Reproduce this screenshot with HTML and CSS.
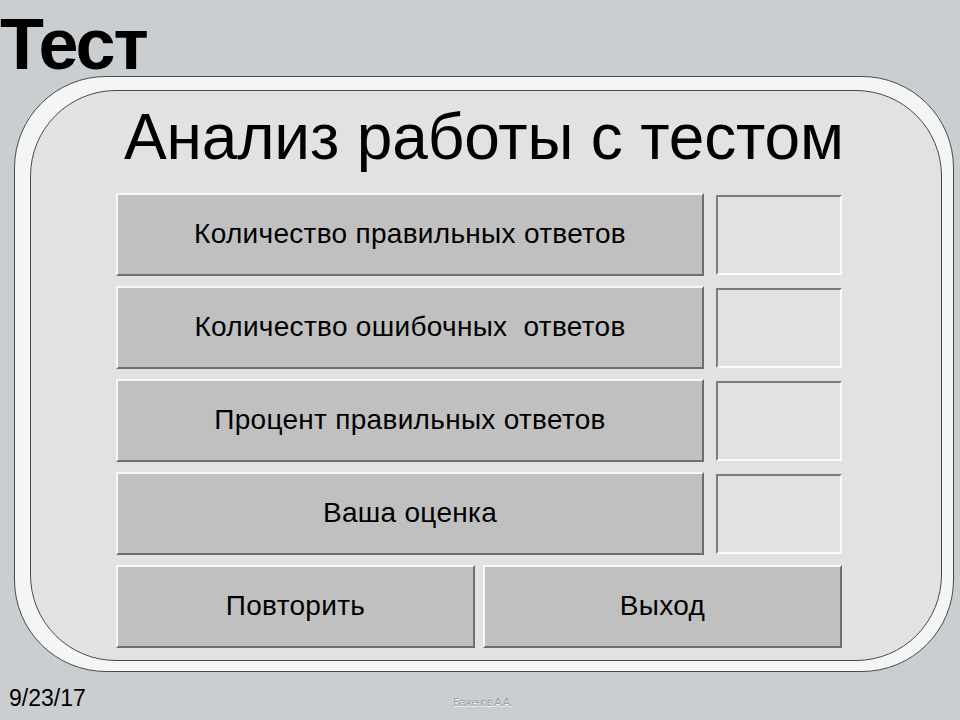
FILE: index.html
```html
<!DOCTYPE html>
<html lang="ru">
<head>
<meta charset="utf-8">
<title>Тест</title>
<link rel="stylesheet" href="styles.css">
</head>
<body>
<div class="page">
  <h1 class="header">Тест</h1>
  <div class="frame">
    <div class="inner">
      <h2 class="title">Анализ работы с тестом</h2>
      <div class="grid">
        <div class="btn">Количество правильных ответов</div>
        <div class="box"></div>
        <div class="btn">Количество ошибочных&nbsp; ответов</div>
        <div class="box"></div>
        <div class="btn">Процент правильных ответов</div>
        <div class="box"></div>
        <div class="btn">Ваша оценка</div>
        <div class="box"></div>
        <div class="actions">
          <div class="btn">Повторить</div>
          <div class="btn">Выход</div>
        </div>
      </div>
    </div>
  </div>
  <div class="footer">
    <span class="date">9/23/17</span>
    <span class="author">Баженов А.А.</span>
    <span></span>
  </div>
</div>
</body>
</html>
```
FILE: styles.css
```css
* { box-sizing: border-box; }
html, body { margin: 0; padding: 0; }
body {
  background: #cbced1;
  font-family: "Liberation Sans", Arial, sans-serif;
  color: #000;
}
.page {
  width: 960px;
  height: 720px;
  overflow: hidden;
}
.header {
  margin: 0;
  padding: 12px 0 0 0;
  height: 76px;
  font-size: 72px;
  line-height: 64px;
  font-weight: bold;
  letter-spacing: -2px;
}
.frame {
  margin-left: 14px;
  width: 940px;
  height: 596px;
  background: #f4f5f5;
  border: 1px solid #4a4a4a;
  border-radius: 92px;
  padding: 13px 11px 10px 15px;
}
.inner {
  height: 100%;
  background: #e1e2e4;
  border: 1px solid #4a4a4a;
  border-radius: 86px;
  padding: 6px 0 0 85px;
}
.title {
  width: 726px;
  margin: 0;
  font-weight: normal;
  font-size: 64px;
  line-height: 80px;
  text-align: center;
  white-space: nowrap;
  padding-left: 8px;
  letter-spacing: -0.15px;
}
.grid {
  margin-top: 16px;
  width: 726px;
  display: grid;
  grid-template-columns: 588px 126px;
  grid-auto-rows: 83px;
  column-gap: 12px;
  row-gap: 10px;
}
.btn {
  background: #c0c0c0;
  border-top: 2px solid #f7f7f7;
  border-left: 2px solid #f7f7f7;
  border-bottom: 2px solid #6e6e6e;
  border-right: 2px solid #6e6e6e;
  display: flex;
  align-items: center;
  justify-content: center;
  font-size: 28px;
  letter-spacing: 0.3px;
  padding-bottom: 2px;
}
.box {
  margin-top: 2px;
  height: 80px;
  background: #e1e2e4;
  border-top: 2px solid #7c7c7c;
  border-left: 2px solid #7c7c7c;
  border-bottom: 2px solid #fbfbfb;
  border-right: 2px solid #fbfbfb;
}
.actions {
  grid-column: 1 / span 2;
  display: flex;
  gap: 8px;
}
.actions .btn {
  flex: 0 0 359px;
}
.footer {
  display: grid;
  grid-template-columns: 1fr auto 1fr;
  align-items: end;
  height: 48px;
  padding: 0 0 9px 9px;
}
.date {
  font-size: 23px;
  line-height: 26px;
}
.author {
  font-size: 10.5px;
  line-height: 12px;
  color: #9b9b9b;
  letter-spacing: -0.6px;
  text-shadow: 0 1px 0 #ffffff;
  padding-right: 4px;
  margin-bottom: 3px;
}
```
